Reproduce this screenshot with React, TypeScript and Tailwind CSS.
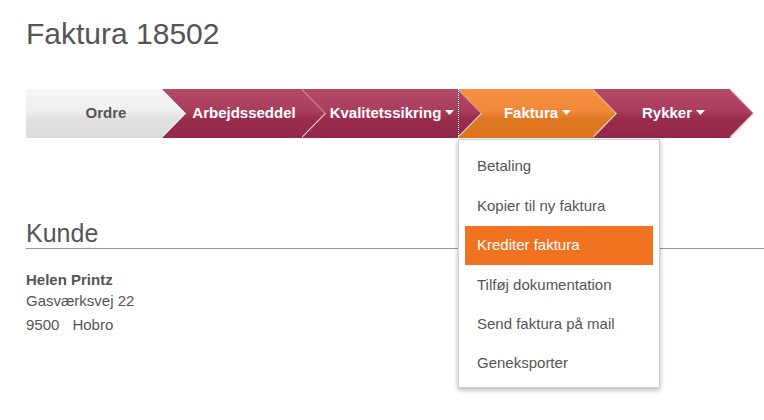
import React from 'react';

type Variant = 'gray' | 'crimson' | 'orange';

const fills: Record<Variant, string> = {
  gray: 'bg-[linear-gradient(to_bottom,#f6f6f6_0%,#efefef_45%,#e1e1e1_60%,#dcdcdc_100%)] text-[#555]',
  crimson: 'bg-[linear-gradient(to_bottom,#b34966_0%,#a93e5c_45%,#9a2c4c_60%,#952849_100%)] text-white',
  orange: 'bg-[linear-gradient(to_bottom,#f69040_0%,#f2883a_45%,#e07823_60%,#dc731f_100%)] text-white',
};

const menuItems = [
  'Betaling',
  'Kopier til ny faktura',
  'Krediter faktura',
  'Tilføj dokumentation',
  'Send faktura på mail',
  'Geneksporter',
];

const Caret = () => (
  <svg width="9" height="5" viewBox="0 0 9 5" className="ml-[4px] mb-[2px]">
    <path d="M0 0 L9 0 L4.5 5 Z" fill="white" />
  </svg>
);

interface StepProps {
  label: string;
  width: string;
  variant: Variant;
  first?: boolean;
  caret?: boolean;
  children?: React.ReactNode;
}

const Step: React.FC<StepProps> = ({ label, width, variant, first, caret, children }) => {
  return (
    <div className={`relative h-full ${width} ${first ? '' : '-ml-[24px]'}`}>
      <div
        className={`relative flex h-full items-center justify-center text-[15px] font-bold ${fills[variant]} ${
          first
            ? '[clip-path:polygon(0_0,calc(100%_-_24px)_0,100%_50%,calc(100%_-_24px)_100%,0_100%)]'
            : '[clip-path:polygon(0_0,calc(100%_-_24px)_0,100%_50%,calc(100%_-_24px)_100%,0_100%,24px_50%)]'
        }`}
      >
        <span>{label}</span>
        {caret && <Caret />}
        {/* edge highlight */}
        <svg className="absolute right-0 top-0 h-full w-[24px]" viewBox="0 0 24 49" preserveAspectRatio="none">
          <path d="M0 0 L24 24.5" stroke="rgba(255,255,255,0.35)" strokeWidth="2" fill="none" />
          <path d="M24 24.5 L0 49" stroke="rgba(255,255,255,0.85)" strokeWidth="2" fill="none" />
        </svg>
      </div>
      {children}
    </div>
  );
};

export default function App() {
  return (
    <div className="min-h-screen bg-white font-['Liberation_Sans',Arial,sans-serif] text-[#555]">
      <div className="pl-[26px] pt-[17px]">
        <h1 className="text-[30px] leading-[34px] text-[#555]">Faktura 18502</h1>

        <nav className="mt-[38px] flex h-[49px]">
          <Step label="Ordre" width="w-[160px]" variant="gray" first />
          <Step label="Arbejdsseddel" width="w-[164px]" variant="crimson" />
          <Step label="Kvalitetssikring" width="w-[180px]" variant="crimson" caret />
          <Step label="Faktura" width="w-[159px]" variant="orange" caret>
            <div className="absolute left-0 top-0 h-full border-l border-dotted border-white" />
            <div className="absolute left-0 top-full z-10 mt-px w-[202px] border border-[#cfcfcf] bg-white px-[6px] pb-[4px] pt-[7px] shadow-[0_2px_5px_rgba(0,0,0,0.3)]">
              {menuItems.map((item) => (
                <div
                  key={item}
                  className={`flex h-[39.4px] items-center pl-[12px] text-[15px] ${
                    item === 'Krediter faktura' ? 'bg-[#f07322] text-white' : 'text-[#555]'
                  }`}
                >
                  {item}
                </div>
              ))}
            </div>
          </Step>
          <Step label="Rykker" width="w-[161px]" variant="crimson" caret />
        </nav>

        <section className="mt-[81px]">
          <h2 className="border-b border-[#999] text-[25px] leading-[29px] text-[#555]">Kunde</h2>
          <div className="mt-[21px] text-[15px] text-[#555]">
            <div className="font-bold leading-[20px]">Helen Printz</div>
            <div className="leading-[21px]">Gasværksvej 22</div>
            <div className="mt-[4px] leading-[20px]">
              <span className="mr-[13px]">9500</span>
              <span>Hobro</span>
            </div>
          </div>
        </section>
      </div>
    </div>
  );
}
